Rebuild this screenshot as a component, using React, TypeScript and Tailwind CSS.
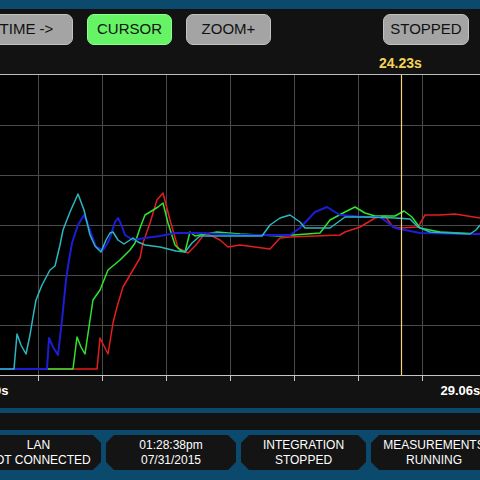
import React from "react";

const font = { fontFamily: '"Liberation Sans", Arial, sans-serif' };

const cyan = "0,369 14,369 17,334 21,345 26,354 30,335 33,317 36,300 42,285 50,270 55,266 60,245 63,230 70,212 78,194 84,210 90,235 95,246 101,252 106,240 110,233 113,232 118,240 124,244 133,238 138,242 145,245 160,247 176,251 185,252 192,243 200,236 220,236 240,236 262,236 270,225 280,218 290,215 300,222 305,228 330,228 345,217 370,217 395,218 410,219 418,227 430,232 470,234 476,230 480,225";
const blue = "0,369 47,369 49,338 53,347 58,355 62,320 66,280 69,260 72,243 78,225 84,215 87,222 90,230 96,247 103,250 107,244 110,238 115,222 118,218 121,224 125,235 133,240 145,238 160,236 175,233 200,233 240,235 260,235 290,235 300,228 315,212 327,207 335,212 340,215 365,217 380,217 395,228 420,233 470,234 480,234";
const green = "0,369 73,369 77,337 81,347 85,354 90,320 93,300 100,290 108,270 120,260 130,250 135,243 140,228 145,215 150,212 158,207 163,203 168,223 175,245 180,250 185,252 190,232 195,236 200,235 217,232 240,234 280,236 320,233 330,220 345,212 355,207 365,213 375,216 395,216 404,211 412,217 420,228 440,232 480,234";
const red = "0,369 97,369 100,338 104,346 108,354 113,323 117,307 123,287 130,275 140,258 143,243 150,223 157,200 163,193 170,220 178,248 188,253 196,245 205,233 212,236 220,240 228,247 240,245 255,247 270,249 280,238 290,237 340,235 345,232 360,227 375,218 385,216 393,227 400,228 418,227 425,215 440,215 455,214 480,218";

const vx = [38, 102, 166, 230, 294, 358, 422];
const hy = [125.5, 175.5, 225.5, 275.5, 325.5];

function Btn({ label, green: g, w = "w-[85px]" }: { label: string; green?: boolean; w?: string }) {
  return (
    <div
      className={`${w} h-[31px] shrink-0 rounded-[7px] border-[1.5px] flex items-center justify-center text-[15px] text-[#111] ${
        g ? "bg-[#66f466] border-[#8cff8c]" : "bg-[#a4a4a4] border-[#c2c2c2]"
      }`}
    >
      {label}
    </div>
  );
}

function Status({ l1, l2, w }: { l1: string; l2: string; w: string }) {
  return (
    <div
      className={`${w} h-[35px] shrink-0 bg-[#141414] flex flex-col items-center justify-center text-white text-[12px] leading-[15px] whitespace-nowrap [clip-path:polygon(8px_0,calc(100%-8px)_0,100%_8px,100%_calc(100%-8px),calc(100%-8px)_100%,8px_100%,0_calc(100%-8px),0_8px)]`}
    >
      <div>{l1}</div>
      <div>{l2}</div>
    </div>
  );
}

export default function App() {
  return (
    <div className="w-[480px] h-[480px] overflow-hidden bg-[#121212] flex flex-col" style={font}>
      <div className="h-[9px] bg-[#0b4a6c] shrink-0" />
      <div className="h-[65px] shrink-0 flex flex-col">
        <div className="mt-[5px] flex items-center ml-[-20px]">
          <Btn label="TIME ->" w="w-[93px]" />
          <div className="w-[14px] shrink-0" />
          <Btn label="CURSOR" green />
          <div className="w-[14px] shrink-0" />
          <Btn label="ZOOM+" />
          <div className="w-[112px] shrink-0" />
          <Btn label="STOPPED" w="w-[86px]" />
        </div>
        <div className="mt-[11px] pl-[379px] text-[14px] leading-[14px] font-bold text-[#f2d25a]">24.23s</div>
      </div>
      <svg width="480" height="308" viewBox="0 74 480 308" className="shrink-0 block">
        <rect x="0" y="75" width="480" height="300" fill="#000" />
        <line x1="0" y1="74.5" x2="480" y2="74.5" stroke="#bdbdbd" strokeWidth="1" />
        {vx.map((x) => (
          <line key={x} x1={x + 0.5} y1="75" x2={x + 0.5} y2="375" stroke="#4a4a4a" strokeWidth="1" />
        ))}
        {hy.map((y) => (
          <line key={y} x1="0" y1={y} x2="480" y2={y} stroke="#4a4a4a" strokeWidth="1" />
        ))}
        <polyline points={red} fill="none" stroke="#e41d1d" strokeWidth="1.5" strokeLinejoin="round" />
        <polyline points={green} fill="none" stroke="#2fe42f" strokeWidth="1.5" strokeLinejoin="round" />
        <polyline points={blue} fill="none" stroke="#1d1dd6" strokeWidth="2" strokeLinejoin="round" />
        <polyline points={cyan} fill="none" stroke="#2bb7bf" strokeWidth="1.5" strokeLinejoin="round" />
        <line x1="401.5" y1="75" x2="401.5" y2="375" stroke="#f5d37a" strokeWidth="1.2" />
        <line x1="0" y1="375.5" x2="480" y2="375.5" stroke="#c4c4c4" strokeWidth="1" />
        {vx.map((x) => (
          <line key={"t" + x} x1={x + 0.5} y1="376" x2={x + 0.5} y2="381" stroke="#c4c4c4" strokeWidth="1" />
        ))}
      </svg>
      <div className="h-[26px] shrink-0 flex items-start text-white text-[13px] leading-[13px] font-bold">
        <div className="ml-[-6px] mt-[2px]">0s</div>
        <div className="ml-[432px] mt-[2px] whitespace-nowrap">29.06s</div>
      </div>
      <div className="h-[5px] bg-[#0b4a6c] shrink-0" />
      <div className="h-[17px] shrink-0" />
      <div className="flex-1 bg-[#0b4a6c] pt-[5px]">
        <div className="flex ml-[-24px] gap-[5px]">
          <Status l1="LAN" l2="NOT CONNECTED" w="w-[125px]" />
          <Status l1="01:28:38pm" l2="07/31/2015" w="w-[130px]" />
          <Status l1="INTEGRATION" l2="STOPPED" w="w-[125px]" />
          <Status l1="MEASUREMENTS" l2="RUNNING" w="w-[126px]" />
        </div>
      </div>
    </div>
  );
}
